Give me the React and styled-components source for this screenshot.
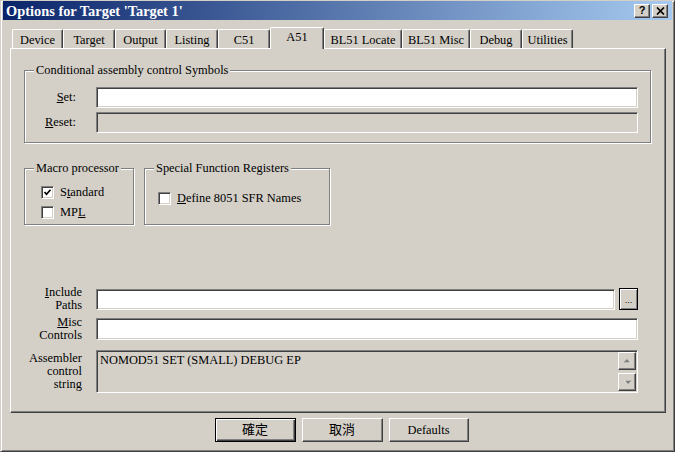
import React from 'react';
import styled, { createGlobalStyle, css } from 'styled-components';

const Global = createGlobalStyle`
  html, body { margin: 0; padding: 0; background: #d4d0c8; }
  body {
    font-family: "Liberation Serif", "Noto Sans CJK TC", serif;
    font-size: 12.4px;
    color: #000;
  }
  * { box-sizing: border-box; }
`;

const sunken = css`
  border: 1px solid;
  border-color: #808080 #ffffff #ffffff #808080;
  box-shadow: inset 1px 1px 0 #404040, inset -1px -1px 0 #d4d0c8;
`;

const raised = css`
  border: 1px solid;
  border-color: #ffffff #404040 #404040 #ffffff;
  box-shadow: inset -1px -1px 0 #808080, inset 1px 1px 0 #d4d0c8;
`;

const Window = styled.div`
  width: 675px;
  height: 452px;
  background: #d4d0c8;
  border: 1px solid;
  border-color: #d4d0c8 #404040 #404040 #d4d0c8;
  box-shadow: inset 1px 1px 0 #ffffff, inset -1px -1px 0 #808080;
  padding: 0 2px 2px 2px;
  display: flex;
  flex-direction: column;
`;

const TitleBar = styled.div`
  height: 19px;
  display: flex;
  align-items: center;
  padding: 0 4px 0 3px;
  background: linear-gradient(to right, #0a246a, #a6caf0);
`;

const TitleText = styled.div`
  flex: 1;
  color: #ffffff;
  font-weight: bold;
  font-size: 14.4px;
  line-height: 16px;
  white-space: nowrap;
`;

const CaptionButton = styled.div`
  width: 16px;
  height: 14px;
  background: #d4d0c8;
  ${raised};
  display: flex;
  align-items: center;
  justify-content: center;
  font-family: "Liberation Sans", sans-serif;
  font-weight: bold;
  font-size: 11px;
  line-height: 11px;
  & + & { margin-left: 2px; }
`;

const Body = styled.div`
  flex: 1;
  display: flex;
  flex-direction: column;
  padding: 7px 6px 0 7px;
`;

const TabRow = styled.div`
  display: flex;
  align-items: flex-end;
  height: 21px;
  padding-left: 2px;
  position: relative;
  z-index: 1;
`;

const Tab = styled.div`
  width: ${p => p.$w}px;
  height: ${p => (p.$active ? 22 : 19)}px;
  margin-bottom: ${p => (p.$active ? -1 : 0)}px;
  background: #d4d0c8;
  border-top: 1px solid #ffffff;
  border-left: 1px solid #ffffff;
  border-right: 1px solid #404040;
  box-shadow: inset -1px 0 0 #808080;
  border-top-left-radius: 2px;
  border-top-right-radius: 2px;
  display: flex;
  align-items: center;
  justify-content: center;
  padding-top: ${p => (p.$active ? 0 : 2)}px;
  padding-bottom: ${p => (p.$active ? 3 : 0)}px;
  white-space: nowrap;
  line-height: 14px;
`;

const Panel = styled.div`
  height: 365px;
  border: 1px solid;
  border-color: #ffffff #404040 #404040 #ffffff;
  box-shadow: inset -1px -1px 0 #808080;
  padding: 21px 14px 19px 13px;
  display: flex;
  flex-direction: column;
`;

const Group = styled.div`
  border: 1px solid #808080;
  box-shadow: 1px 1px 0 #ffffff, inset 1px 1px 0 #ffffff;
  width: ${p => (p.$w ? `${p.$w}px` : 'auto')};
  display: flex;
  flex-direction: column;
`;

const Caption = styled.div`
  align-self: flex-start;
  margin: -8px 0 0 9px;
  padding: 0 2px;
  background: #d4d0c8;
  line-height: 14px;
  white-space: nowrap;
`;

const SymGrid = styled.div`
  display: grid;
  grid-template-columns: 51px 1fr;
  column-gap: 20px;
  row-gap: 4px;
  align-items: center;
  padding: 10px 12px 9px 0;
`;

const Label = styled.div`
  text-align: right;
  line-height: 13px;
  white-space: nowrap;
`;

const TextInput = styled.div`
  height: ${p => p.$h || 21}px;
  ${sunken};
  background: ${p => (p.$disabled ? '#d4d0c8' : '#ffffff')};
  flex: 1;
`;

const GroupRow = styled.div`
  display: flex;
  gap: 10px;
  margin-top: 25px;
`;

const CheckList = styled.div`
  display: flex;
  flex-direction: column;
  gap: 6px;
  padding: ${p => p.$top}px 0 5px ${p => p.$left}px;
`;

const CheckRow = styled.div`
  display: flex;
  align-items: center;
  gap: 6px;
  height: 14px;
  line-height: 14px;
  white-space: nowrap;
`;

const CheckBox = styled.div`
  width: 13px;
  height: 13px;
  background: #ffffff;
  ${sunken};
  display: flex;
  align-items: center;
  justify-content: center;
`;

const Fields = styled.div`
  margin-top: auto;
  display: flex;
  flex-direction: column;
  padding-right: 13px;
`;

const FieldRow = styled.div`
  display: grid;
  grid-template-columns: 58px 1fr;
  grid-template-rows: ${p => p.$h}px;
  column-gap: 14px;
  align-items: center;
  margin-top: ${p => p.$gap || 0}px;
`;

const InputWithButton = styled.div`
  display: flex;
  align-items: center;
  gap: 4px;
`;

const BrowseButton = styled.div`
  width: 19px;
  height: 22px;
  background: #d4d0c8;
  border: 1px solid #000000;
  box-shadow: inset 1px 1px 0 #ffffff, inset -1px -1px 0 #808080;
  display: flex;
  align-items: flex-end;
  justify-content: center;
  font-family: "Liberation Sans", sans-serif;
  font-size: 9px;
  line-height: 13px;
  padding-bottom: 2px;
`;

const ReadOnlyBox = styled.div`
  height: 43px;
  ${sunken};
  background: #d4d0c8;
  display: flex;
  padding: 1px;
`;

const BoxText = styled.div`
  flex: 1;
  padding: 1px 2px;
  line-height: 14px;
  white-space: nowrap;
`;

const ScrollCol = styled.div`
  width: 18px;
  display: flex;
  flex-direction: column;
  justify-content: space-between;
`;

const ScrollButton = styled.div`
  height: 18px;
  background: #d4d0c8;
  ${raised};
  display: flex;
  align-items: center;
  justify-content: center;
`;

const ButtonRow = styled.div`
  display: flex;
  justify-content: center;
  gap: 6px;
  padding-left: 7px;
  margin-top: 5px;
`;

const PushButton = styled.div`
  width: ${p => p.$w || 81}px;
  height: 24px;
  background: #d4d0c8;
  display: flex;
  align-items: center;
  justify-content: center;
  font-size: ${p => (p.$cjk ? 13 : 12.4)}px;
  line-height: 14px;
  ${p =>
    p.$default
      ? css`
          border: 1px solid #000000;
          box-shadow: inset 1px 1px 0 #ffffff, inset -1px -1px 0 #404040,
            inset -2px -2px 0 #808080;
        `
      : raised};
`;

const Check = () => (
  <svg width="9" height="9" viewBox="0 0 9 9">
    <polyline points="1.5,4 3.5,6.2 7.5,1.8" fill="none" stroke="#000" strokeWidth="1.7" />
  </svg>
);

const CloseGlyph = () => (
  <svg width="9" height="8" viewBox="0 0 9 8">
    <path d="M1 0.5 L8 7.5 M8 0.5 L1 7.5" stroke="#000" strokeWidth="1.7" />
  </svg>
);

const Arrow = ({ down }) => (
  <svg width="9" height="6" viewBox="0 0 9 6">
    <g transform={down ? 'rotate(180 4.5 3)' : undefined}>
      <polygon points="1.5,5 8.5,5 5,1.5" fill="#ffffff" />
      <polygon points="0.5,4.5 7.5,4.5 4,1" fill="#808080" />
    </g>
  </svg>
);

const tabs = [
  ['Device', 51],
  ['Target', 52],
  ['Output', 51],
  ['Listing', 52],
  ['C51', 52],
  ['A51', 54, true],
  ['BL51 Locate', 78],
  ['BL51 Misc', 68],
  ['Debug', 52],
  ['Utilities', 51],
];

export default function App() {
  return (
    <>
      <Global />
      <Window>
        <TitleBar>
          <TitleText>Options for Target 'Target 1'</TitleText>
          <CaptionButton>?</CaptionButton>
          <CaptionButton>
            <CloseGlyph />
          </CaptionButton>
        </TitleBar>
        <Body>
          <TabRow>
            {tabs.map(([name, w, active]) => (
              <Tab key={name} $w={w} $active={active}>
                {name}
              </Tab>
            ))}
          </TabRow>
          <Panel>
            <Group>
              <Caption>Conditional assembly control Symbols</Caption>
              <SymGrid>
                <Label>
                  <u>S</u>et:
                </Label>
                <TextInput />
                <Label>
                  <u>R</u>eset:
                </Label>
                <TextInput $disabled />
              </SymGrid>
            </Group>
            <GroupRow>
              <Group $w={110}>
                <Caption>Macro processor</Caption>
                <CheckList $top={10} $left={16}>
                  <CheckRow>
                    <CheckBox>
                      <Check />
                    </CheckBox>
                    <span>
                      S<u>t</u>andard
                    </span>
                  </CheckRow>
                  <CheckRow>
                    <CheckBox />
                    <span>
                      MP<u>L</u>
                    </span>
                  </CheckRow>
                </CheckList>
              </Group>
              <Group $w={186}>
                <Caption>Special Function Registers</Caption>
                <CheckList $top={16} $left={13}>
                  <CheckRow>
                    <CheckBox />
                    <span>
                      <u>D</u>efine 8051 SFR Names
                    </span>
                  </CheckRow>
                </CheckList>
              </Group>
            </GroupRow>
            <Fields>
              <FieldRow $h={22}>
                <Label>
                  <u>I</u>nclude
                  <br />
                  Paths
                </Label>
                <InputWithButton>
                  <TextInput $h={21} />
                  <BrowseButton>...</BrowseButton>
                </InputWithButton>
              </FieldRow>
              <FieldRow $h={22} $gap={8}>
                <Label>
                  <u>M</u>isc
                  <br />
                  Controls
                </Label>
                <TextInput $h={22} />
              </FieldRow>
              <FieldRow $h={43} $gap={10}>
                <Label>
                  Assembler
                  <br />
                  control
                  <br />
                  string
                </Label>
                <ReadOnlyBox>
                  <BoxText>NOMOD51 SET (SMALL) DEBUG EP</BoxText>
                  <ScrollCol>
                    <ScrollButton>
                      <Arrow />
                    </ScrollButton>
                    <ScrollButton>
                      <Arrow down />
                    </ScrollButton>
                  </ScrollCol>
                </ReadOnlyBox>
              </FieldRow>
            </Fields>
          </Panel>
          <ButtonRow>
            <PushButton $default $cjk>
              確定
            </PushButton>
            <PushButton $cjk>取消</PushButton>
            <PushButton $w={80}>Defaults</PushButton>
          </ButtonRow>
        </Body>
      </Window>
    </>
  );
}
